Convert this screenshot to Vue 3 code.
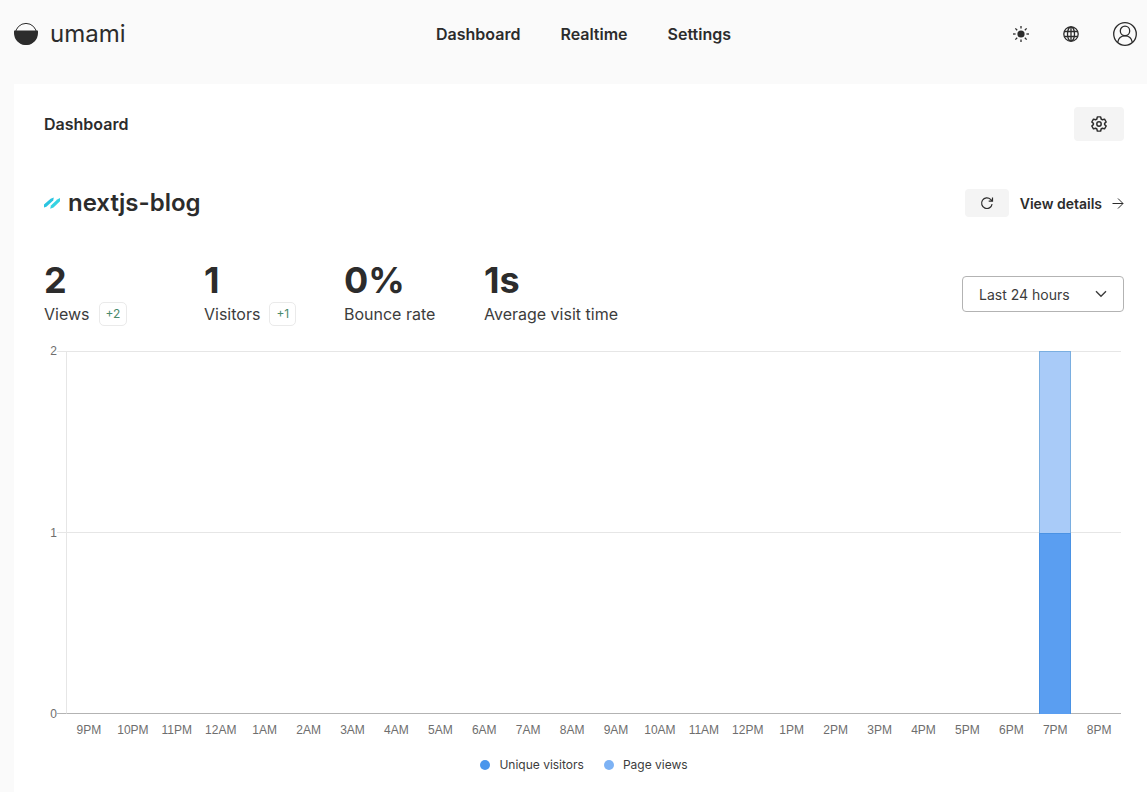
<script setup>
import { ref } from 'vue'

const nav = ['Dashboard', 'Realtime', 'Settings']
const metrics = [
  { value: '2', label: 'Views', change: '+2' },
  { value: '1', label: 'Visitors', change: '+1' },
  { value: '0%', label: 'Bounce rate' },
  { value: '1s', label: 'Average visit time' },
]
const range = ref('24h')
const max = 2
const names = ['9PM', '10PM', '11PM', '12AM', '1AM', '2AM', '3AM', '4AM', '5AM', '6AM', '7AM', '8AM', '9AM', '10AM', '11AM', '12PM', '1PM', '2PM', '3PM', '4PM', '5PM', '6PM', '7PM', '8PM']
const hours = names.map((name, i) => ({
  name,
  visitors: i === 22 ? 1 : 0,
  views: i === 22 ? 2 : 0,
}))
const rays = [0, 45, 90, 135, 180, 225, 270, 315]
</script>

<template>
  <div class="page">
    <header class="header">
      <a href="#" class="brand">
        <svg width="24" height="24" viewBox="0 0 24 24" aria-hidden="true">
          <circle cx="12" cy="12" r="10.6" fill="none" stroke="currentColor" stroke-width="1" />
          <path d="M0 9.2Q0 8.6 .6 8.6H23.4Q24 8.6 24 9.2V11A12 12 0 0 1 0 11Z" fill="currentColor" />
        </svg>
        <span>umami</span>
      </a>
      <nav class="nav">
        <a v-for="n in nav" :key="n" href="#">{{ n }}</a>
      </nav>
      <div class="tools">
        <button type="button" class="tool" aria-label="Theme">
          <svg width="16" height="16" viewBox="0 0 16 16">
            <circle cx="8" cy="8" r="3.6" fill="currentColor" />
            <path v-for="r in rays" :key="r" d="M8 0V2.6" :transform="`rotate(${r} 8 8)`" stroke="currentColor" stroke-width="1.3" />
          </svg>
        </button>
        <button type="button" class="tool" aria-label="Language">
          <svg width="16" height="16" viewBox="0 0 16 16" fill="none" stroke="currentColor" stroke-width="1.3">
            <circle cx="8" cy="8" r="7.2" />
            <ellipse cx="8" cy="8" rx="3.5" ry="7.2" />
            <path d="M8 .8V15.2M1.5 5.5H14.5M1.5 10.5H14.5" />
          </svg>
        </button>
        <button type="button" class="tool profile" aria-label="Profile">
          <svg width="24" height="24" viewBox="0 0 24 24" fill="none" stroke="currentColor" stroke-width="1.3">
            <circle cx="12" cy="12" r="11.3" />
            <circle cx="12" cy="8.9" r="4.7" />
            <path d="M4.7 20.4C5.4 16.4 8 13.9 12 13.9S18.6 16.4 19.3 20.4" />
          </svg>
        </button>
      </div>
    </header>

    <main class="card">
      <div class="row">
        <h1>Dashboard</h1>
        <button type="button" class="btn gear" aria-label="Edit dashboard">
          <svg width="16" height="16" viewBox="0 0 24 24" fill="none" stroke="currentColor" stroke-width="2.2" stroke-linejoin="round">
            <circle cx="12" cy="12" r="3.3" />
            <path d="M9.5 1.3H14.5L15.2 4.5L17.2 5.7L20.3 4.7L22.8 9L20.4 11.1V12.9L22.8 15L20.3 19.3L17.2 18.3L15.2 19.5L14.5 22.7H9.5L8.8 19.5L6.8 18.3L3.7 19.3L1.2 15L3.6 12.9V11.1L1.2 9L3.7 4.7L6.8 5.7L8.8 4.5Z" />
          </svg>
        </button>
      </div>

      <div class="row site">
        <h2>
          <svg width="16" height="16" viewBox="0 0 16 16" aria-hidden="true">
            <path d="M0 12.4V9.6L6.6 3.7L9.8 2.6L9.2 5.4L2.4 11.8Z" fill="#2cc4e0" />
            <path d="M6.2 13.8L6.9 10.6L13.2 4.6L16 2.9V6.2L9.5 12.4Z" fill="#35d3e2" />
          </svg>
          <span>nextjs-blog</span>
        </h2>
        <div class="actions">
          <button type="button" class="btn refresh" aria-label="Refresh">
            <svg width="14" height="14" viewBox="0 0 14 14" fill="none" stroke="currentColor" stroke-width="1.2">
              <path d="M12.1 8.2A5.3 5.3 0 1 1 10.6 3.4L12.4 5.1M12.5 1.4V5.2H8.7" />
            </svg>
          </button>
          <a href="#" class="details">
            <span>View details</span>
            <svg width="12" height="12" viewBox="0 0 12 12" fill="none" stroke="currentColor" stroke-width="1">
              <path d="M.5 6.5H11M6 1.5L11 6.5L6 11.5" />
            </svg>
          </a>
        </div>
      </div>

      <div class="row summary">
        <div class="metrics">
          <div v-for="m in metrics" :key="m.label" class="metric">
            <div class="value">{{ m.value }}</div>
            <div class="label">
              <span>{{ m.label }}</span>
              <span v-if="m.change" class="change">{{ m.change }}</span>
            </div>
          </div>
        </div>
        <div class="picker">
          <select v-model="range" aria-label="Date range">
            <option value="24h">Last 24 hours</option>
            <option value="7d">Last 7 days</option>
          </select>
          <svg width="12" height="8" viewBox="0 0 12 8" fill="none" stroke="currentColor" stroke-width="1.4" aria-hidden="true">
            <path d="M1 1.2L6 6.2L11 1.2" />
          </svg>
        </div>
      </div>

      <div class="chart">
        <div class="scale"><span>2</span><span>1</span><span>0</span></div>
        <div class="ticks"></div>
        <div class="plot">
          <div v-for="h in hours" :key="h.name" class="slot">
            <div v-if="h.views" class="bar" :style="{ height: (h.views / max) * 100 + '%' }">
              <div class="unique" :style="{ height: (h.visitors / h.views) * 100 + '%' }"></div>
            </div>
          </div>
        </div>
        <div class="hours"><span v-for="h in hours" :key="h.name">{{ h.name }}</span></div>
      </div>

      <div class="legend">
        <span class="key"><i class="dot visitors"></i>Unique visitors</span>
        <span class="key"><i class="dot views"></i>Page views</span>
      </div>
    </main>
  </div>
</template>

<style>
body {
  background: #fafafa;
}
</style>

<style scoped>
.page {
  min-height: 100vh;
  display: flex;
  flex-direction: column;
  font-family: Inter, "Liberation Sans", sans-serif;
  font-size: 16px;
  color: #2c2c2c;
}
.page * {
  box-sizing: border-box;
}
a {
  color: inherit;
  text-decoration: none;
}
svg {
  display: block;
  flex: none;
}
button {
  border: 0;
  padding: 0;
  color: inherit;
  background: none;
  display: flex;
  align-items: center;
  justify-content: center;
}
h1,
h2 {
  margin: 0;
}
.header {
  display: grid;
  grid-template-columns: 1fr auto 1fr;
  align-items: center;
  height: 68px;
  margin-bottom: 16px;
  padding: 0 10px 0 14px;
}
.brand {
  display: flex;
  align-items: center;
  gap: 12px;
  font-size: 24px;
  line-height: 32px;
  font-weight: 400;
}
.nav {
  display: flex;
  gap: 40px;
  padding-left: 16px;
  font-weight: 600;
}
.tools {
  display: flex;
  align-items: center;
  justify-content: flex-end;
}
.tool {
  width: 50px;
  height: 34px;
}
.profile {
  width: 24px;
  margin-left: 17px;
}
.card {
  flex: 1;
  margin-left: 14px;
  padding: 23px 23px 16px 30px;
  background: #fff;
}
.row {
  display: flex;
  justify-content: space-between;
  align-items: center;
}
h1 {
  font-size: 16px;
  line-height: 24px;
  font-weight: 600;
}
.btn {
  background: #f4f4f4;
  border-radius: 4px;
}
.gear {
  width: 50px;
  height: 34px;
}
.site {
  margin-top: 46px;
}
h2 {
  display: flex;
  align-items: center;
  gap: 8px;
  font-size: 24px;
  line-height: 32px;
  font-weight: 600;
}
.actions {
  display: flex;
  align-items: center;
  gap: 11px;
}
.refresh {
  width: 44px;
  height: 28px;
}
.details {
  display: flex;
  align-items: center;
  gap: 10px;
  font-size: 14px;
  font-weight: 600;
}
.summary {
  margin-top: 41px;
}
.metrics {
  display: flex;
  gap: 20px;
}
.metric {
  min-width: 120px;
}
.metric:first-child {
  min-width: 140px;
}
.value {
  font-size: 36px;
  line-height: 40px;
  font-weight: 700;
  font-optical-sizing: none;
}
.label {
  display: flex;
  align-items: center;
  gap: 9px;
  height: 28px;
  white-space: nowrap;
  color: #3c3c3c;
}
.change {
  padding: 0 6px;
  border: 1px solid #eaeaea;
  border-radius: 5px;
  font-size: 12px;
  line-height: 22px;
  color: #4a8a6c;
}
.picker {
  display: grid;
  align-items: center;
  width: 162px;
  color: #3c3c3c;
}
.picker > * {
  grid-area: 1 / 1;
}
.picker svg {
  justify-self: end;
  margin-right: 17px;
  pointer-events: none;
}
select {
  appearance: none;
  width: 100%;
  height: 36px;
  padding: 0 16px;
  border: 1px solid #b3b3b3;
  border-radius: 4px;
  background: #fff;
  color: inherit;
  font: inherit;
  font-size: 14px;
}
.chart {
  display: grid;
  grid-template-columns: 13px 10px 1fr;
  margin-top: 23px;
  padding-right: 3px;
  font-family: "Liberation Sans", Arial, sans-serif;
  font-size: 12px;
  line-height: 16px;
  color: #6e6e6e;
}
.scale {
  display: flex;
  flex-direction: column;
  justify-content: space-between;
  margin: -8px 0;
  text-align: right;
}
.ticks,
.plot {
  height: 363px;
  background: linear-gradient(#e6e6e6, #e6e6e6) 0 50% / 100% 1px no-repeat;
  border-top: 1px solid #e6e6e6;
  border-bottom: 1px solid #b3b3b3;
}
.ticks {
  border-right: 1px solid #e6e6e6;
}
.plot {
  display: flex;
}
.slot {
  flex: 1;
  display: flex;
  flex-direction: column;
  align-items: center;
  justify-content: flex-end;
  margin: -1px 0;
}
.bar {
  display: flex;
  align-items: flex-end;
  width: 73%;
  background: #a9cbf8;
  box-shadow: inset 0 0 0 1px #7aaee0;
}
.unique {
  width: 100%;
  background: #5a9ef1;
  border: 1px solid #4a92e4;
  border-bottom: 0;
}
.hours {
  grid-column: 3;
  display: flex;
  margin-top: 8px;
}
.hours span {
  flex: 1 1 0;
  min-width: 0;
  text-align: center;
}
.legend {
  display: flex;
  justify-content: center;
  gap: 20px;
  margin-top: 19px;
  font-size: 12px;
  line-height: 16px;
  color: #3c3c3c;
}
.key {
  display: flex;
  align-items: center;
  gap: 9px;
}
.dot {
  width: 10px;
  height: 10px;
  border-radius: 50%;
}
.visitors {
  background: #4a96ec;
}
.views {
  background: #7db2f4;
}
</style>
